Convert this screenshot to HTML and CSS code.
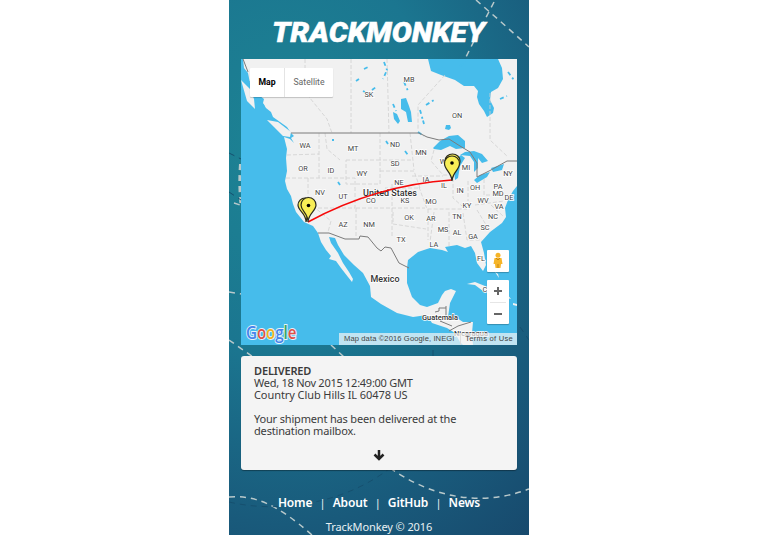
FILE: index.html
```
<!DOCTYPE html>
<html lang="en">
<head>
<meta charset="utf-8">
<title>TrackMonkey</title>
<link rel="stylesheet" href="styles.css">
</head>
<body>
<div class="app">
  <svg class="trails" viewBox="229 0 300 535" aria-hidden="true">
    <path d="M476 0L500 21L529 47M494 2L480 29L466 57M229 292L242 294M229 340L253 357M331 345L344 357M229 497C255 495 277 504 312 535M390 468C430 496 479 508 529 489M234 203L240 205"/>
    <path class="wide" d="M240.500 164Q239 185 241 204"/>
    <path class="shade" d="M229 502C285 515 350 500 390 468M433 350V358M229 153L241 159M229 192L241 200M520 327L529 340"/>
  </svg>
  <header><h1><svg viewBox="0 0 220 32" role="img"><text x="1" y="26.500" textLength="213" lengthAdjust="spacingAndGlyphs">TRACKMONKEY</text></svg></h1></header>
  <section class="map">
    <svg class="geo" viewBox="241 59 276 286">
      <path class="land" d="M243 59L244 68L248 73L250 83L253 91L260 96L264 99L263 103L266 108L271 112L273 117L280 122L287 127L291 133L294 136L291 138L294 143L290 139L284 137L287 149L286 158L287 171L285 181L287 189L291 196L293 204L296 212L300 217L304 222L313 226L318 233L321 242L326 250L331 256L329 259L336 261L341 268L348 277L352 282L353 279L349 272L343 263L338 253L331 243L329 237L335 238L338 245L344 255L354 265L363 273L370 286L371 297L381 304L397 313L413 317L427 315L432 323L447 328L455 333L460 342L463 345H473L472 333L473 322L463 322L457 318L448 317L450 303L456 291L451 289L445 291L442 295L438 303L427 307L420 305L412 297L407 283L407 268L408 260L418 252L430 248L442 250L448 252L445 247L457 245L465 248L471 246L475 253L477 263L483 271L486 265L484 253L481 242L490 232L502 223L506 217L505 208L508 200L513 191L517 186V59Z"/>
      <path class="water" d="M428 59L431 71L441 75L455 80L464 86L474 86L478 91L477 97L479 104L484 111L487 117L493 113L494 108L490 100L491 92L498 88L503 79L502 68L498 59ZM433 148L440 141L449 136L458 135L465 141L465 148L456 149L450 146L441 150L434 149ZM455 180L454 170L456 159L461 155L465 158L460 166L458 178ZM460 155L465 152L474 151L482 154L488 161L482 163L478 158L478 168L474 172L474 162L470 156ZM474 180L480 175L490 172L487 177L477 183ZM491 168L504 164L502 170L493 172ZM401 99L406 98L409 106L411 112L412 122L408 122L406 112L401 109ZM446 125L450 125L451 128L449 130L445 129ZM393 112L397 114L400 121L398 124L394 119Z"/>
      <path class="water-line" d="M384 62L387 70L383 79M418 132L424 136M364 69L368 67M356 81L359 79M372 90L376 87M363 91L365 92M437 72L442 67M500 99L507 96M508 72L514 80M426 105L434 100M338 182L340 185M332 140H334M386 141L388 144M460 66L466 62M405 151L408 155M393 104L396 111M404 82L408 91M420 110L424 124M253 96L264 106M268 120L276 125M242 77L252 84M241 90L248 100"/>
      <path class="isle" d="M267 120L278 122L291 132L290 137L283 136L274 127ZM241 80L250 89L254 99L255 109L247 101ZM467 284L475 282L485 286L492 291L483 291L475 285ZM500 292L507 294L511 299L503 297ZM513 303L517 304V306L513 305ZM495 272L498 274L499 278Z"/>
      <path class="state" d="M305 59V92L327 119L332 133M351 59V133M387 59L389 133M445 75L418 105V130M490 93V140L508 157M319 133V178M287 155L319 154M325 133L327 149L340 160M346 160H380V184H346ZM380 133V160H412M410 133L414 170M286 178H355V208H306M308 178V202L331 221L328 232M356 208V236M356 208H392V236M392 184V208H425M380 171H414L420 188H385M412 176H443M419 187L427 209H467M434 150L431 161L443 175H453M453 178V198L462 206M468 181V201M484 179V195H508M475 205L504 201M428 209V240M449 212V246M463 213L467 240H482M393 212V224L426 229M434 212L430 242M477 210L488 228M491 205L503 216"/>
      <path class="border" d="M243 59L248 72M291 133H419L427 137L439 140L449 139L460 146L470 152L477 163L477 177L491 170L507 161H517M318 233H329L345 239H359L360 236L368 237L377 248L381 251L385 247L391 248L399 263L409 268M446 306V308H439V311L435 312M446 308V317L440 321L452 326M449 331L458 326L471 322"/>
      <g class="labels">
        <text x="305" y="148">WA</text><text x="353" y="151">MT</text><text x="303" y="171">OR</text><text x="331" y="173">ID</text><text x="362" y="175.500">WY</text><text x="320" y="195">NV</text><text x="343" y="199">UT</text><text x="371" y="203">CO</text><text x="343" y="226.500">AZ</text><text x="369" y="226.500">NM</text><text x="369" y="97">SK</text><text x="409" y="82">MB</text><text x="457" y="118">ON</text><text x="395" y="147">ND</text><text x="421" y="155">MN</text><text x="395" y="166">SD</text><text x="444" y="164">WI</text><text x="466" y="170">MI</text><text x="508" y="176">NY</text><text x="399" y="184.500">NE</text><text x="426" y="182">IA</text><text x="444" y="188">IL</text><text x="460" y="192.500">IN</text><text x="475" y="190">OH</text><text x="498" y="188.500">PA</text><text x="498" y="196">MD</text><text x="509" y="200">DE</text><text x="405" y="203">KS</text><text x="431" y="203.500">MO</text><text x="467" y="207.500">KY</text><text x="483" y="203">WV</text><text x="499" y="209">VA</text><text x="409" y="220">OK</text><text x="431" y="220.500">AR</text><text x="457" y="218.500">TN</text><text x="493" y="219">NC</text><text x="443" y="232">MS</text><text x="457" y="235">AL</text><text x="473" y="239">GA</text><text x="485" y="230">SC</text><text x="401" y="241.500">TX</text><text x="434" y="247">LA</text><text x="481" y="261">FL</text><text x="491" y="292">Cuba</text>
      </g>
      <g class="labels country">
        <text x="390" y="195.500" textLength="54" lengthAdjust="spacingAndGlyphs">United States</text><text x="385" y="281.500" textLength="29" lengthAdjust="spacingAndGlyphs">Mexico</text><text class="minor" x="440" y="319.500" textLength="36" lengthAdjust="spacingAndGlyphs">Guatemala</text><text class="minor" x="471" y="335.500" textLength="34" lengthAdjust="spacingAndGlyphs">Nicaragua</text>
      </g>
      <path class="route" d="M308 222Q376 185 452 180"/>
      <g class="pins">
        <path d="M306 222C306 213 298 211 298 205A7 7 0 0 1 312 205C312 211 307 213 306 222Z"/>
        <path d="M308 222C308 213 301 211 301 205A7.500 7.500 0 0 1 316 205C316 211 308.500 213 308 222Z"/>
        <path d="M452 180C452 170 445 168 445 161A7.500 7 0 0 1 460 161C460 168 453 170 452 180Z"/>
        <path d="M452 181C451.500 172 444.500 170 444.500 163.500A7.500 7.500 0 0 1 459.500 163.500C459.500 170 452.500 172 452 181Z"/>
      </g>
      <circle cx="308.500" cy="205.500" r="1.800"/><circle cx="452" cy="163" r="1.800"/>
      <g class="google"><text x="246" y="339" textLength="50.500" lengthAdjust="spacingAndGlyphs"><tspan class="g-blue">G</tspan><tspan class="g-red">o</tspan><tspan class="g-gold">o</tspan><tspan class="g-blue">g</tspan><tspan class="g-green">l</tspan><tspan class="g-red">e</tspan></text></g>
    </svg>
    <div class="types"><b>Map</b><span>Satellite</span></div>
    <div class="controls">
      <div class="person"><svg viewBox="0 0 22 22"><circle cx="11" cy="5.300" r="2.500"/><path d="M7.500 8H14.500L15.500 14H14L13.500 18H8.500L8 14H6.500Z"/><path class="fold" d="M9 8L11 10L13 8M11 14V18"/></svg></div>
      <div class="zoom"><svg viewBox="0 0 22 44"><path d="M7 11H15M11 7V15M7 34H15"/><path class="rule" d="M3 22.500H19"/></svg></div>
    </div>
    <div class="credits"><span>Map data ©2016 Google, INEGI</span><span class="terms">Terms of Use</span></div>
  </section>
  <section class="status">
    <strong>DELIVERED</strong>
    <p class="date">Wed, 18 Nov 2015 12:49:00 GMT</p>
    <p class="place">Country Club Hills IL 60478 US</p>
    <p class="message">Your shipment has been delivered at the<br>destination mailbox.</p>
    <svg class="arrow" viewBox="0 0 12 12"><path d="M6 1V10M1.500 5.500L6 10L10.500 5.500"/></svg>
  </section>
  <nav><a>Home</a><i>|</i><a>About</a><i>|</i><a>GitHub</a><i>|</i><a>News</a></nav>
  <footer>TrackMonkey © 2016</footer>
</div>
</body>
</html>
```
FILE: styles.css
```
* { box-sizing: border-box; }
body { margin: 0; background: #fff; font-family: "Noto Sans", sans-serif; }
.app { position: relative; isolation: isolate; width: 300px; height: 535px; margin-left: 229px; padding: 0 12px; overflow: hidden; background: radial-gradient(ellipse 380px 480px at 18% 28%, #1d8494 0%, #1b7690 42%, #195a7b 78%, #17466a 108%); }
.trails { position: absolute; inset: 0; z-index: -1; width: 300px; height: 535px; }
.trails path { fill: none; stroke: #b9c9cb; stroke-width: 1.5; stroke-dasharray: 6 5; }
.trails .wide { stroke-width: 3; }
.trails .shade { stroke: #16506f; stroke-width: 1; }
header { height: 59px; padding-top: 15px; }
h1 { margin: 0 0 0 30px; line-height: 0; }
h1 svg { width: 220px; height: 32px; }
h1 text { fill: #fff; stroke: #fff; stroke-width: .5px; font: italic 900 28px Roboto, sans-serif; }
.map { position: relative; width: 276px; height: 286px; background: #46bceb; overflow: hidden; }
.geo { display: block; width: 276px; height: 286px; }
.land, .isle { fill: #f1f1f1; }
.water { fill: #46bceb; }
.water-line { fill: none; stroke: #46bceb; stroke-width: 1.8; stroke-dasharray: 4 3 2 2; }
.state { fill: none; stroke: #d1d1d1; stroke-width: .8; stroke-dasharray: 4 2; }
.border { fill: none; stroke: #7b7b7b; stroke-width: 1; }
.labels { font: 7.3px Roboto, sans-serif; fill: #444; text-anchor: middle; stroke: #fff; stroke-width: 1.5px; paint-order: stroke; }
.country { font-size: 8.8px; font-weight: 500; fill: #333; }
.country .minor { font-size: 7.5px; }
.route { fill: none; stroke: #f60909; stroke-width: 1.6; }
.pins { fill: #f8ee56; stroke: #29291c; stroke-width: 1.2; }
.google { font: 600 18.5px "Open Sans", sans-serif; stroke: #e4f2fb; stroke-width: 2px; paint-order: stroke; }
.g-blue { fill: #4683ea; }
.g-red { fill: #df5147; }
.g-gold { fill: #eeb21b; }
.g-green { fill: #35a563; }
.types { position: absolute; left: 9px; top: 9px; display: flex; height: 29px; background: #fff; border-radius: 1px; box-shadow: 0 1px 1px rgba(0,0,0,.2); font: 8.7px/29px Roboto, sans-serif; color: #666; }
.types b { width: 35px; text-align: center; color: #000; font-weight: 700; border-right: 1px solid #e4e4e4; }
.types span { width: 48px; text-align: center; }
.controls { position: absolute; right: 8px; top: 191px; display: grid; gap: 8px; }
.controls > div { width: 22px; background: #fff; border-radius: 1px; box-shadow: 0 1px 1px rgba(0,0,0,.25); }
.controls svg { display: block; width: 100%; height: 100%; }
.person { height: 22px; fill: #f6b529; }
.fold { fill: none; stroke: #c88816; }
.zoom { height: 44px; fill: none; stroke: #666; stroke-width: 2; }
.zoom .rule { stroke: #e6e6e6; stroke-width: 1; }
.credits { position: absolute; right: 0; bottom: 0; display: flex; justify-content: space-between; width: 178px; height: 12px; padding: 0 4px 0 5px; background: rgba(245,245,245,.7); font: 7.6px/11px "Liberation Sans", sans-serif; letter-spacing: .1px; color: #444; white-space: nowrap; }
.terms { border-left: 1px solid #ddd; padding-left: 4px; letter-spacing: .25px; }
.status { display: flex; flex-direction: column; align-items: flex-start; height: 114px; margin-top: 11px; padding: 9px 13px; border-radius: 3px; background: #f4f4f4; box-shadow: 0 1px 1px rgba(0,0,0,.35); color: #3b3b3b; font-size: 11px; line-height: 12px; white-space: nowrap; }
.status p { margin: 0; }
.status strong { font-weight: 600; letter-spacing: -.15px; }
.date { letter-spacing: -.26px; }
.place { letter-spacing: -.08px; }
.status .message { margin-top: 12px; letter-spacing: -.17px; }
.arrow { width: 12px; height: 12px; margin-top: 12px; align-self: center; fill: none; stroke: #222; stroke-width: 2.5; }
nav { display: flex; justify-content: center; gap: 7.5px; margin-top: 24px; color: #fff; font-size: 12px; line-height: 18px; font-weight: 600; letter-spacing: -.15px; }
nav i { font-style: normal; font-weight: 400; font-size: 10px; }
footer { margin-top: 6px; text-align: center; color: #e8f1f4; font-size: 11px; line-height: 18px; letter-spacing: -.1px; }
```
